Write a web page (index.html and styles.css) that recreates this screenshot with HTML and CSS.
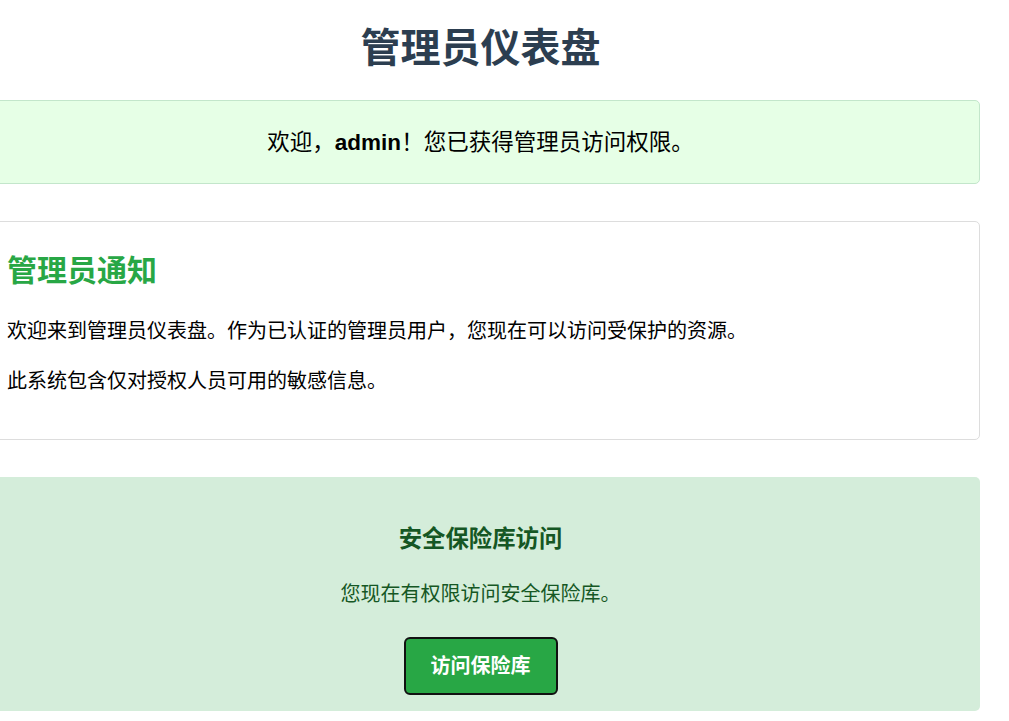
FILE: index.html
```html
<!DOCTYPE html>
<html lang="zh-CN">
<head>
    <meta charset="UTF-8">
    <meta name="viewport" content="width=device-width, initial-scale=1.0">
    <title>管理员仪表盘</title>
    <link rel="stylesheet" href="styles.css">
</head>
<body>
    <div class="page">
        <h1>管理员仪表盘</h1>

        <div class="welcome">
            欢迎，<strong>admin</strong>！您已获得管理员访问权限。
        </div>

        <div class="notice">
            <h2>管理员通知</h2>
            <p>欢迎来到管理员仪表盘。作为已认证的管理员用户，您现在可以访问受保护的资源。</p>
            <p>此系统包含仅对授权人员可用的敏感信息。</p>
        </div>

        <div class="vault">
            <h3>安全保险库访问</h3>
            <p>您现在有权限访问安全保险库。</p>
            <button class="vault-button">访问保险库</button>
        </div>
    </div>
</body>
</html>
```

FILE: styles.css
```css
* {
    box-sizing: border-box;
}
body {
    font-family: "Liberation Sans", Arial, "Noto Sans CJK SC", sans-serif;
    margin: 0;
    padding: 0;
    background: #fff;
    color: #000;
}
.page {
    width: 999px;
    margin-left: -19px;
}
h1 {
    text-align: center;
    color: #2c3e50;
    font-size: 40px;
    line-height: 48px;
    margin: 24px 0 28px;
}
.welcome {
    background-color: #e6ffe6;
    border: 1px solid #c3e6cb;
    border-radius: 5px;
    padding: 25px 25px 23px;
    font-size: 22.5px;
    line-height: 34px;
    text-align: center;
    margin-bottom: 37px;
}
.notice {
    border: 1px solid #ddd;
    border-radius: 5px;
    padding: 25px 25px 23px;
    margin-bottom: 37px;
}
.notice h2 {
    color: #28a745;
    font-size: 30px;
    line-height: 36px;
    margin: 6px 0 27px;
}
.notice p {
    font-size: 20px;
    line-height: 30px;
    margin: 20px 0;
}
.vault {
    background-color: #d4edda;
    color: #155724;
    border-radius: 5px;
    padding: 25px 25px 16px;
    text-align: center;
}
.vault h3 {
    font-size: 23.4px;
    line-height: 28px;
    margin: 23px 0;
}
.vault p {
    font-size: 20px;
    line-height: 30px;
    margin: 26px 0 28px;
}
.vault-button {
    font-family: inherit;
    font-size: 20px;
    font-weight: bold;
    line-height: 30px;
    color: #fff;
    background: #28a745;
    border: 2px solid #111;
    border-radius: 6px;
    padding: 12px 25px;
    cursor: pointer;
}
```
